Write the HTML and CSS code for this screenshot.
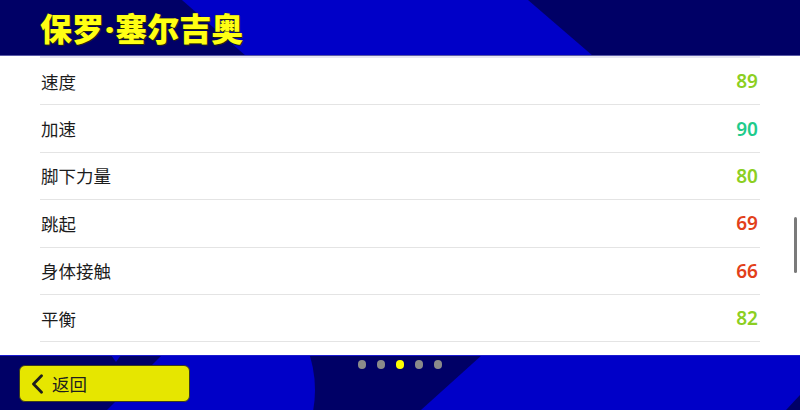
FILE: index.html
```html
<!DOCTYPE html>
<html lang="zh">
<head>
<meta charset="utf-8">
<title>保罗·塞尔吉奥</title>
<link rel="stylesheet" href="styles.css">
</head>
<body>
<div class="screen">
  <header class="header">
    <h1 class="title">保罗<span class="sep">·</span>塞尔吉奥</h1>
  </header>
  <main class="content">
    <ul class="stats">
      <li class="row"><span class="label">速度</span><span class="val good">89</span></li>
      <li class="row"><span class="label">加速</span><span class="val great">90</span></li>
      <li class="row"><span class="label">脚下力量</span><span class="val good">80</span></li>
      <li class="row"><span class="label">跳起</span><span class="val poor">69</span></li>
      <li class="row"><span class="label">身体接触</span><span class="val poor">66</span></li>
      <li class="row"><span class="label">平衡</span><span class="val good">82</span></li>
    </ul>
    <div class="scrollbar"></div>
  </main>
  <footer class="footer">
    <div class="back-cell">
      <button class="back">
        <svg class="chev" width="13" height="20" viewBox="0 0 13 20"><path d="M10.5 1.8 L2.5 10 L10.5 18.2" fill="none" stroke="#1e1e1e" stroke-width="2.8" stroke-linecap="round" stroke-linejoin="round"/></svg>
        <span>返回</span>
      </button>
    </div>
    <div class="dots">
      <span class="dot"></span><span class="dot"></span><span class="dot active"></span><span class="dot"></span><span class="dot"></span>
    </div>
    <div></div>
  </footer>
</div>
</body>
</html>
```
FILE: styles.css
```css
* { box-sizing: border-box; }
html, body { margin: 0; padding: 0; }
body {
  width: 800px;
  height: 410px;
  overflow: hidden;
  font-family: "Noto Sans CJK SC", "Noto Sans", sans-serif;
  background: #ffffff;
}
.screen {
  width: 800px;
  height: 410px;
  display: flex;
  flex-direction: column;
}
.header {
  height: 56px;
  flex: none;
  display: flex;
  align-items: center;
  padding-left: 40px;
  background-color: #000066;
  background-image: url("data:image/svg+xml,%3Csvg xmlns='http://www.w3.org/2000/svg' width='800' height='56'%3E%3Crect width='800' height='56' fill='%23000066'/%3E%3Cpolygon points='182,0 528,0 593,56 246,56' fill='%230000c8'/%3E%3Crect y='55' width='800' height='1' fill='%235a5aa6'/%3E%3C/svg%3E");
  background-repeat: no-repeat;
  background-size: 800px 56px;
}
.title {
  margin: 0;
  font-size: 32px;
  font-weight: 900;
  color: #ffff14;
  line-height: 1;
  letter-spacing: 0;
  text-shadow: 0 0 1px #333300, 1px 1px 0 #2a2a00;
}
.sep {
  font-family: "Noto Sans", sans-serif;
  font-weight: 900;
  margin: 0 1px;
}
.content {
  flex: 1;
  position: relative;
  background: #ffffff;
  padding: 0 40px;
}
.stats {
  list-style: none;
  margin: 0;
  padding: 0;
  border-top: 2px solid #e6e6f2;
}
.row {
  height: 47.4px;
  display: flex;
  align-items: center;
  justify-content: space-between;
  border-bottom: 1px solid #e4e4e4;
  padding: 0 2px 0 1px;
}
.label {
  font-size: 17.5px;
  color: #1c1c1c;
}
.val {
  font-family: "Noto Sans", sans-serif;
  font-size: 19px;
  font-weight: 600;
}
.good { color: #8ccf22; }
.great { color: #1fcb8c; }
.poor { color: #e2401a; }
.scrollbar {
  position: absolute;
  right: 3px;
  top: 161px;
  width: 3px;
  height: 56px;
  border-radius: 2px;
  background: #7a7a7a;
}
.footer {
  height: 55px;
  flex: none;
  display: grid;
  grid-template-columns: 1fr auto 1fr;
  align-items: start;
  background-color: #000066;
  background-image: url("data:image/svg+xml,%3Csvg xmlns='http://www.w3.org/2000/svg' width='800' height='55'%3E%3Crect width='800' height='55' fill='%23000066'/%3E%3Cpolygon points='482,0 800,0 800,40 786,55 421,55' fill='%230000c8'/%3E%3Ccircle cx='200' cy='35' r='115' fill='%230000c8'/%3E%3Cpolygon points='0,0 162,0 107,55 0,55' fill='%23000066'/%3E%3Cpolygon points='111,0 121,0 116,7' fill='%230000c8'/%3E%3Crect width='800' height='1' fill='%231a1ad0'/%3E%3C/svg%3E");
  background-repeat: no-repeat;
  background-size: 800px 55px;
}
.back-cell {
  padding: 10px 0 0 19px;
}
.back {
  width: 171px;
  height: 37px;
  display: flex;
  align-items: center;
  gap: 8px;
  padding: 0 0 0 11px;
  background: #e6e600;
  border: 1px solid #3a3a20;
  border-radius: 6px;
  font-family: "Noto Sans CJK SC", sans-serif;
  font-size: 17.5px;
  color: #1e1e1e;
}
.chev { flex: none; }
.dots {
  display: flex;
  gap: 10.5px;
  padding-top: 5px;
}
.dot {
  width: 8.5px;
  height: 8.5px;
  border-radius: 50%;
  background: #8a8a8a;
}
.dot.active { background: #ffff00; }
```
